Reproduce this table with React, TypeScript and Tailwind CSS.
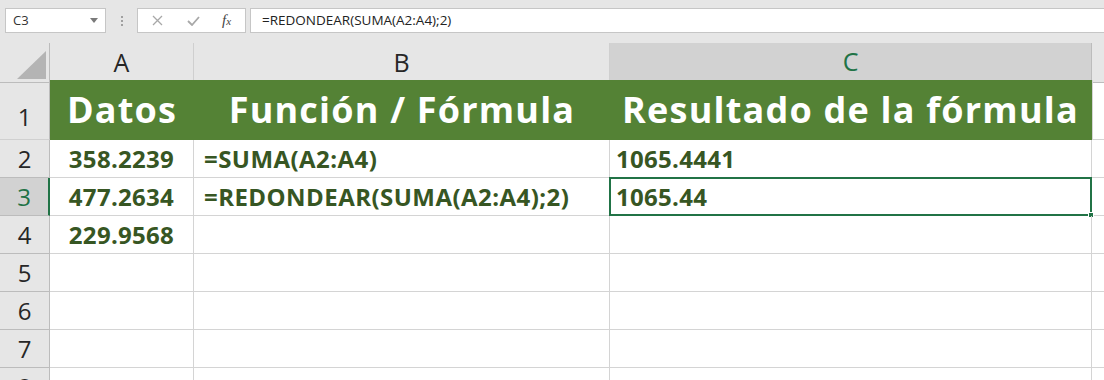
import React from "react";

const COLS = "grid grid-cols-[50px_144px_416px_482px_1fr]";

const rows = [
  { n: 2, a: "358.2239", b: "=SUMA(A2:A4)", c: "1065.4441" },
  { n: 3, a: "477.2634", b: "=REDONDEAR(SUMA(A2:A4);2)", c: "1065.44", selected: true },
  { n: 4, a: "229.9568", b: "", c: "" },
  { n: 5, a: "", b: "", c: "" },
  { n: 6, a: "", b: "", c: "" },
  { n: 7, a: "", b: "", c: "" },
  { n: 8, a: "", b: "", c: "" },
];

function FormulaBar() {
  return (
    <div className="h-[43px] bg-[#e6e6e6] flex items-start pt-[8px] pl-[5px] font-['Open_Sans',sans-serif] text-[13px] text-[#333]">
      {/* name box */}
      <div className="w-[101px] h-[25px] border border-[#c6c6c6] bg-white flex items-center pl-[7px] pr-[7px]">
        <span>C3</span>
        <svg className="ml-auto" width="8" height="5" viewBox="0 0 8 5">
          <path d="M0 0h8L4 5z" fill="#7a7a7a" />
        </svg>
      </div>

      {/* separator dots */}
      <div className="ml-[15px] mt-[8px] flex flex-col gap-[2px]">
        <span className="w-[2px] h-[2px] bg-[#a0a0a0]" />
        <span className="w-[2px] h-[2px] bg-[#a0a0a0]" />
        <span className="w-[2px] h-[2px] bg-[#a0a0a0]" />
      </div>

      {/* cancel / enter / fx */}
      <div className="ml-[14px] w-[109px] h-[25px] border border-[#c6c6c6] bg-white flex items-center">
        <svg className="ml-[14px]" width="11" height="11" viewBox="0 0 11 11">
          <path d="M1 1l9 9M10 1l-9 9" stroke="#a8a8a8" strokeWidth="1.3" />
        </svg>
        <svg className="ml-[24px]" width="13" height="10" viewBox="0 0 13 10">
          <path d="M1 5l4 4 7-8" stroke="#a8a8a8" strokeWidth="1.8" fill="none" />
        </svg>
        <span className="ml-[22px] font-['Liberation_Serif',serif] italic text-[15px] text-[#444] leading-none">
          f<span className="text-[11px]">x</span>
        </span>
      </div>

      {/* formula */}
      <div className="ml-[4px] flex-1 h-[25px] border border-r-0 border-[#c6c6c6] bg-white flex items-center pl-[11px] text-[13.5px] text-[#222]">
        =REDONDEAR(SUMA(A2:A4);2)
      </div>
    </div>
  );
}

function HeaderRow() {
  return (
    <div className={`${COLS} h-[37px] text-[25px] text-[#262626]`}>
      <div className="relative bg-[#e6e6e6] border-r border-b border-[#bcbcbc]">
        <svg className="absolute right-[3px] bottom-[3px]" width="29" height="28" viewBox="0 0 29 28">
          <path d="M29 0V28H0z" fill="#b4b4b4" />
        </svg>
      </div>
      <div className="bg-[#e6e6e6] border-r border-b border-r-[#cfcfcf] border-b-[#bcbcbc] flex items-center justify-center">A</div>
      <div className="bg-[#e6e6e6] border-r border-b border-r-[#cfcfcf] border-b-[#bcbcbc] flex items-center justify-center">B</div>
      <div className="bg-[#d2d2d2] border-r border-r-[#bcbcbc] border-b-2 border-b-[#217346] flex items-center justify-center text-[#217346]">C</div>
      <div className="bg-[#e6e6e6] border-b border-[#bcbcbc]" />
    </div>
  );
}

function TitleRow() {
  return (
    <div className={`${COLS} h-[60px]`}>
      <div className="bg-[#e6e6e6] border-r border-b border-r-[#bcbcbc] border-b-[#d0d0d0] flex items-center justify-center pt-[14px] text-[24px] text-[#262626]">
        1
      </div>
      <div className="col-span-3 bg-[#548235] grid grid-cols-[144px_416px_481px] items-center text-white font-bold text-[36px] tracking-[1.2px] leading-none border-r border-[#548235]">
        <div className="text-center">Datos</div>
        <div className="text-center">Función / Fórmula</div>
        <div className="text-center">Resultado de la fórmula</div>
      </div>
      <div className="border-l border-b border-[#d4d4d4]" />
    </div>
  );
}

function DataRow({ n, a, b, c, selected }: { n: number; a: string; b: string; c: string; selected?: boolean }) {
  return (
    <div className={`${COLS} h-[38px] text-[24px] leading-none`}>
      <div
        className={
          selected
            ? "bg-[#d2d2d2] border-b border-b-[#bcbcbc] border-r-2 border-r-[#217346] flex items-center justify-center text-[#217346]"
            : "bg-[#e6e6e6] border-r border-b border-[#bcbcbc] flex items-center justify-center text-[#262626]"
        }
      >
        {n}
      </div>
      <div className="border-r border-b border-[#d4d4d4] flex items-center justify-center font-bold tracking-[0.3px] text-[#375623]">{a}</div>
      <div className="border-r border-b border-[#d4d4d4] flex items-center pl-[10px] font-bold tracking-[0.45px] text-[#375623]">{b}</div>
      <div className="relative border-r border-b border-[#d4d4d4] flex items-center pl-[6px] font-bold tracking-[0.3px] text-[#375623]">
        {c}
        {selected && (
          <div className="absolute -left-px -top-px -right-px -bottom-px border-2 border-[#217346]">
            <span className="absolute -right-[4px] -bottom-[4px] w-[6px] h-[6px] bg-[#217346] border border-white" />
          </div>
        )}
      </div>
      <div className="border-b border-[#d4d4d4]" />
    </div>
  );
}

export default function App() {
  return (
    <div className="w-[1104px] h-[380px] overflow-hidden bg-white font-['Open_Sans',sans-serif]">
      <FormulaBar />
      <HeaderRow />
      <TitleRow />
      {rows.map((r) => (
        <DataRow key={r.n} {...r} />
      ))}
    </div>
  );
}
